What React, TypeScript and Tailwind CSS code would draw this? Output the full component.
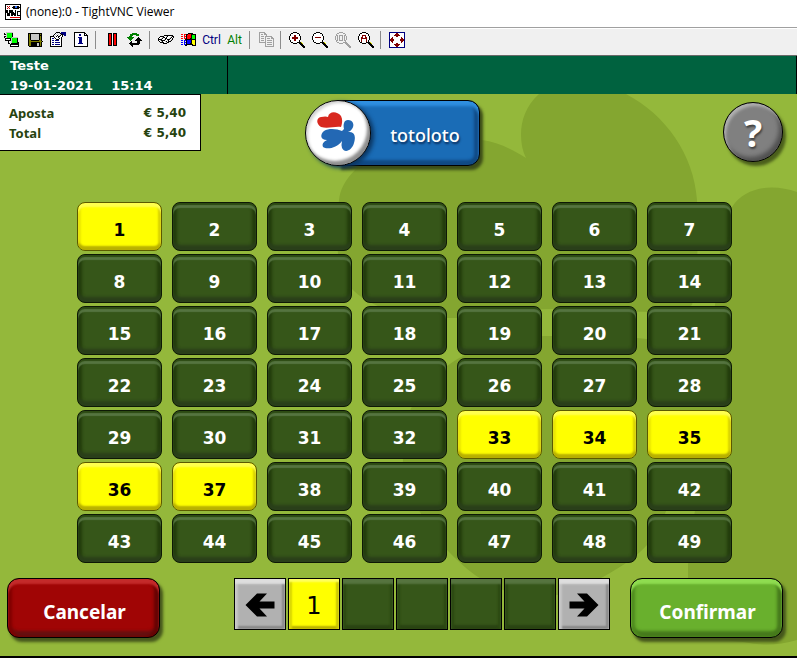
import type { ReactNode } from "react";

const TOOL = "flex h-[22px] w-[23px] shrink-0 items-center justify-center";

const PALETTE: Record<string, string> = {
  k: "#000000",
  w: "#ffffff",
  g: "#00ff00",
  G: "#008000",
  b: "#000080",
  B: "#0000ff",
  r: "#ff0000",
  R: "#800000",
  y: "#ffff00",
  o: "#808000",
  s: "#a0a0a0",
  l: "#c8c8c8",
};

function Pixels({ rows }: { rows: string[] }) {
  return (
    <svg width="16" height="16" viewBox="0 0 16 16" shapeRendering="crispEdges" aria-hidden="true">
      {rows.flatMap((row, y) =>
        row.split("").map((c, x) =>
          PALETTE[c] ? <rect key={x + "-" + y} x={x} y={y} width="1" height="1" fill={PALETTE[c]} /> : null,
        ),
      )}
    </svg>
  );
}

const NEW_CONNECTION = [
  "..lllllll.......",
  "k.lgggggk.......",
  "kklgggggk.......",
  "..lgggggk.......",
  "kklgggggk.......",
  "k.lgggggllllll..",
  ".kkkkkklgggggk..",
  ".kwwwwklgggggk..",
  ".kkkkkklgggggk..",
  "....k..lgggggk..",
  "....k..lgggggkk.",
  "....kk.kkkkkkkk.",
  "......kkkkkkkkk.",
  "......kwwwwwwwk.",
  "......kkkkkkkkk.",
  "................",
];
const SAVE = [
  "................",
  ".kkkkkkkkkkkkkk.",
  ".kokllllllllkok.",
  ".kokllllllllkkk.",
  ".kokllllllllkok.",
  ".kokllllllllkok.",
  ".kokllllllllkok.",
  ".kokllllllllkok.",
  ".kookkkkkkkkook.",
  ".koooooooooooook",
  ".kookkkkkkkkkok.",
  ".kookkkkkkllkok.",
  ".kookkkkkkllkok.",
  ".kookkkkkkllkok.",
  "..kkkkkkkkkkkkk.",
  "................",
];
const OPTIONS = [
  "......kkkk.bbbbb",
  ".....kwlwlkbbbbb",
  "....kwlwlwlkkbbb",
  "...kwlwkwlkwk.bb",
  "kkkklwkwkkwwk...",
  "kwwwkwwwkwwk....",
  "kwbbwkwwwkwk....",
  "kwwwwwkkkwwk....",
  "kwbbwbbbbwwk....",
  "kwwwwwwwwwwk....",
  "kwbbwbbbbbwk....",
  "kwwwwwwwwwwk....",
  "kwbbwbbbbbwk....",
  "kwwwwwwwwwwk....",
  "kkkkkkkkkkkk....",
  "................",
];
const INFO = [
  ".kkkkkkkkkkk....",
  ".kwwwwwwwwwkk...",
  ".kwwwwbbwwwkwk..",
  ".kwwwwbbwwwkkkk.",
  ".kwwwwwwwwwwwwk.",
  ".kwwwbbbbwwwwwk.",
  ".kwwwwbbbwwwwwk.",
  ".kwwwwbbbwwwwwk.",
  ".kwwwwbbbwwwwwk.",
  ".kwwwwbbbwwwwwk.",
  ".kwwwwbbbwwwwwk.",
  ".kwwwbbbbbwwwwk.",
  ".kwwwwwwwwwwwwk.",
  ".kwwwwwwwwwwwwk.",
  ".kkkkkkkkkkkkkk.",
  "................",
];
const PAUSE = [
  "................",
  "....kkkk.kkkk...",
  ...Array<string>(11).fill("....krrk.krrk..."),
  "....kkkk.kkkk...",
  "................",
  "................",
];
const REFRESH = [
  "................",
  ".....GGGGG......",
  "...GGGGGGGGG....",
  "...GGG...GGG....",
  "..GGG...........",
  "GGGGGGG....k....",
  ".GGGGG....kkk...",
  "..GGG....kkkkk..",
  "...G....kkkkkkk.",
  "....k.....kkk...",
  "...kk.....kkk...",
  "..kkkkkkkkkkk...",
  "...kkkkkkkkk....",
  "....kk..........",
  ".....k..........",
  "................",
];
const KEYS = [
  "................",
  "................",
  "................",
  "......kkkkkkkkk.",
  "..kkkkwwlkwwwlkk",
  ".kwwlkkwkwwwlkwk",
  "kwwlkwwkkwwlkwk.",
  "kkkkwwlkwkkkwlk.",
  "kwlkkkkwwlkwlk..",
  ".kwlkwwlkwkkk...",
  "..kkkkwwlkk.....",
  ".....kkkk.......",
  "................",
  "................",
  "................",
  "................",
];
const WINDOWS_KEY = [
  "................",
  ".......kkkkk....",
  "rr.rrkkrrrkkkkk.",
  "...r.krrrrkgggk.",
  "rr.rrkrrrrkgggk.",
  "...r.krrrrkgggk.",
  "rr.rrkrrrkkgggk.",
  "....kkkkkkkkkkk.",
  "BB.BBkBBBBkyyyk.",
  "...B.kBBBBkyyyk.",
  "BB.BBkBBBBkyyyk.",
  "...B.kBBBkkyyyk.",
  "BB.BBkkkkkkkyyk.",
  "....kk.....kkkk.",
  "................",
  "................",
];
const COPY = [
  ".ssssss.........",
  ".s....ss........",
  ".s.ss.sss.......",
  ".s......s.......",
  ".s.sss.sssssss..",
  ".s.....s.....ss.",
  ".s.sss.s.sss.sss",
  ".s.....s.......s",
  ".s.sss.s.sssss.s",
  ".s.....s.......s",
  ".sssssss.sssss.s",
  ".......s.......s",
  ".......s.sssss.s",
  ".......s.......s",
  ".......sssssssss",
  "................",
];
const FULL_SCREEN = [
  "bbbbbbbbbbbbbbbb",
  "bwwwwwwRRwwwwwwb",
  "bwwwwwRRRRwwwwwb",
  "bwwwwRRRRRRwwwwb",
  "bwwwwwwRRwwwwwwb",
  "bwwRwwwwwwwwRwwb",
  "bwRRwwwwwwwwRRwb",
  "bRRRRwwwwwwRRRRb",
  "bRRRRwwwwwwRRRRb",
  "bwRRwwwwwwwwRRwb",
  "bwwRwwwwwwwwRwwb",
  "bwwwwwwRRwwwwwwb",
  "bwwwwRRRRRRwwwwb",
  "bwwwwwRRRRwwwwwb",
  "bwwwwwwRRwwwwwwb",
  "bbbbbbbbbbbbbbbb",
];

function Magnifier({ kind }: { kind: "in" | "out" | "actual" | "auto" }) {
  const off = kind === "actual";
  const ink = off ? "#a0a0a0" : "#000";
  return (
    <svg width="16" height="16" viewBox="0 0 16 16" shapeRendering="crispEdges" aria-hidden="true" fill="none">
      <path
        d="M4 .5h4M2 1.500h2M8 1.500h2M1.500 2v2M10.500 2v2M.5 4v4M11.500 4v4M1.500 8v2M10.500 8v2M2 10.500h2M8 10.500h2M4 11.500h4"
        stroke={ink}
      />
      <path d="M4 1h4v1h2v2h1v4h-1v2H8v1H4v-1H2V8H1V4h1V2h2z" fill={off ? "#f0f0f0" : "#fff"} />
      <path d="M10 10h2v1h1v1h1v1h1v1h1v2h-2v-1h-1v-1h-1v-1h-1v-1h-1z" fill={ink} />
      {!off && <path d="M12 10h1v1h-1zM13 11h1v1h-1z" fill="#e8e800" />}
      {kind === "in" && <path d="M3 6h6M6 3v6" stroke="#800000" strokeWidth="1.5" />}
      {kind === "out" && <path d="M3 5.500h6" stroke="#800000" />}
      {kind === "actual" && <path d="M2.500 3v6M4.500 3.500h3v5h-3zM9.500 3v6" stroke="#a0a0a0" />}
      {kind === "auto" && <path d="M3.500 10V5h1V3h3v2h1v5M4 6.500h4" stroke="#800000" />}
    </svg>
  );
}

function Tool({ label, children }: { label: string; children: ReactNode }) {
  return (
    <button type="button" aria-label={label} className={TOOL}>
      {children}
    </button>
  );
}

function Separator() {
  return (
    <div className="h-[18px] w-2 shrink-0 pl-[3px]">
      <div className="h-full w-px bg-[#8c8c8c]" />
    </div>
  );
}

function VncLogo() {
  return (
    <svg width="16" height="16" viewBox="0 0 16 16" shapeRendering="crispEdges" aria-hidden="true" fill="none">
      <rect x=".5" y=".5" width="15" height="15" fill="#fff" stroke="#000" />
      <path d="M2 2h1v1H2zM4 2h1v1H4zM3 3h1v1H3zM2 4h1v1H2zM4 4h1v1H4z" fill="#c00000" />
      <path d="M7 3h1V2h6v1h1v1h-1v1H8V4H7z" fill="#000" />
      <path d="M10 2h2v2h-2z" fill="#3070ff" />
      <path d="M1 6h2v3h1V6h2v3H5v3H2V9H1zM6 6h2v2h1v1h1V6h1v6H9v-1H8v1H6zM12 7h3v1h-2v3h2v1h-3z" fill="#000" />
      <path d="M5 13.500h10" stroke="#e00000" />
    </svg>
  );
}

function Backdrop() {
  return (
    <svg
      className="absolute inset-0 h-full w-full"
      viewBox="0 94 797 562"
      preserveAspectRatio="xMidYMid slice"
      fill="#84a630"
      aria-hidden="true"
    >
      <path d="M539 94C526 106 521 120 521 135Q521 148 526 158C512 149 497 142 482 140C430 134 380 145 355 170C345 180 340 190 339 200C336 225 335 260 345 280C357 300 390 318 447 318C485 318 515 309 552 309C590 309 620 312 655 312Q680 312 692 305C697 285 699 240 697 200C694 155 666 115 626 94Z" />
      <path d="M463 356C485 345 510 336 552 336C590 336 620 336 647 339Q680 342 704 340Q712 325 715 305Q717 275 720 253C723 225 727 213 732 207C745 187 772 183 797 192V640Q770 648 743 642Q700 640 688 610V565Q690 535 697 500Q680 500 668 506C661 525 654 537 647 545C638 555 625 565 603 577Q580 590 557 595Q530 600 503 590Q485 582 475 575C455 560 435 540 420 512C406 485 402 470 403 460C403 435 404 420 413 405C422 388 440 368 463 356Z" />
    </svg>
  );
}

const KEY_BASE =
  "flex h-[49px] items-center justify-center rounded-lg border font-['DejaVu_Sans',sans-serif] text-[17px] leading-5 font-bold pt-1.5";
const KEY_ON =
  "border-[#5c5a00] bg-[#ffff00] text-black shadow-[inset_0_4px_2px_#ffff50,inset_0_-4px_2px_#b8b000,inset_-3px_0_2px_#d8d200,inset_3px_0_2px_#ece800]";
const KEY_OFF =
  "border-[#0d1805] bg-[#365619] text-white shadow-[inset_0_2px_1px_#2c4a12,inset_0_5px_1px_#557440,inset_0_-5px_3px_#2a3f1a,inset_4px_0_3px_#233d0c,inset_-4px_0_3px_#233d0c]";

const SELECTED = new Set([1, 33, 34, 35, 36, 37]);

const CELL = "flex h-[52px] w-[52px] shrink-0 items-center justify-center border border-black";
const CELL_GREEN =
  "bg-[#365619] shadow-[inset_0_5px_2px_#56743f,inset_3px_0_2px_#2c4911,inset_-3px_0_2px_#2c4911,inset_0_-4px_2px_#2b4514]";
const CELL_GREY =
  "pt-0.5 bg-[#b1b1b1] shadow-[inset_0_5px_2px_#dedede,inset_3px_0_2px_#c4c4c4,inset_-3px_0_2px_#888888,inset_0_-3px_2px_#858585]";
const CELL_YELLOW =
  "pt-1 bg-[#ffff00] shadow-[inset_0_3px_2px_#ffff60,inset_3px_0_2px_#d8d400,inset_-3px_0_2px_#c8c400,inset_0_-3px_2px_#b8b000]";

const ACTION =
  "h-[60px] w-[153px] shrink-0 rounded-xl border border-black pt-2 pl-0.5 font-['Noto_Sans',sans-serif] text-[19px] leading-6 font-bold text-white";

const AMOUNT = "font-['DejaVu_Sans',sans-serif] text-xs leading-5";

function Arrow({ flip }: { flip?: boolean }) {
  return (
    <svg width="30" height="24" viewBox="0 0 30 24" aria-hidden="true" className={flip ? "rotate-180" : ""}>
      <path d="M.5 12L12 .5H22L14.500 8.500H29.500V15.500H14.500L22 23.500H12Z" fill="#000" />
    </svg>
  );
}

export default function App() {
  return (
    <div className="flex min-h-screen flex-col border-b-2 border-black bg-white">
      <div className="flex h-[27px] items-center gap-[5px] pb-1 pl-[5px]">
        <VncLogo />
        <h1 className="font-['Open_Sans','Noto_Sans',sans-serif] text-xs leading-4 text-black">
          (none):0 - TightVNC Viewer
        </h1>
      </div>

      <div
        role="toolbar"
        aria-label="Viewer"
        className="flex h-[29px] items-center overflow-hidden border-t border-b border-t-[#a0a0a0] border-b-[#696969] bg-[#f0f0f0] pb-1 shadow-[inset_0_1px_0_#fff]"
      >
        <Tool label="New connection"><Pixels rows={NEW_CONNECTION} /></Tool>
        <Tool label="Save session"><Pixels rows={SAVE} /></Tool>
        <Tool label="Options"><Pixels rows={OPTIONS} /></Tool>
        <Tool label="Connection info"><Pixels rows={INFO} /></Tool>
        <Separator />
        <Tool label="Pause"><Pixels rows={PAUSE} /></Tool>
        <Tool label="Refresh"><Pixels rows={REFRESH} /></Tool>
        <Separator />
        <Tool label="Send Ctrl-Alt-Del"><Pixels rows={KEYS} /></Tool>
        <Tool label="Send Win key"><Pixels rows={WINDOWS_KEY} /></Tool>
        <button type="button" className={TOOL + " font-['Roboto',sans-serif] text-xs text-[#000080]"}>Ctrl</button>
        <button type="button" className={TOOL + " font-['Roboto',sans-serif] text-xs text-[#008000]"}>Alt</button>
        <Separator />
        <Tool label="Transfer files"><Pixels rows={COPY} /></Tool>
        <Separator />
        <Tool label="Zoom in"><Magnifier kind="in" /></Tool>
        <Tool label="Zoom out"><Magnifier kind="out" /></Tool>
        <Tool label="Actual size"><Magnifier kind="actual" /></Tool>
        <Tool label="Auto zoom"><Magnifier kind="auto" /></Tool>
        <Separator />
        <Tool label="Full screen"><Pixels rows={FULL_SCREEN} /></Tool>
      </div>

      <header className="flex h-[38px] border-r border-black bg-[#00623f] font-['DejaVu_Sans',sans-serif] text-[13px] leading-5 font-bold text-white">
        <div className="w-[228px] border-r border-black pl-2.5">
          <p>Teste</p>
          <p className="flex gap-[18px]">
            <span>19-01-2021</span>
            <span>15:14</span>
          </p>
        </div>
      </header>

      <main className="relative isolate flex grow flex-col overflow-hidden bg-[#94b83b]">
        <Backdrop />
        <div className="relative flex h-[108px] items-start justify-between pr-[14px]">
          <dl className="flex h-[57px] w-[201px] flex-col justify-center border border-l-0 border-black bg-white pr-3.5 pl-[9px] font-['Noto_Sans',sans-serif] text-[13px] leading-5 font-bold text-[#27430f]">
            <div className="flex justify-between"><dt>Aposta</dt><dd className={AMOUNT}>€ 5,40</dd></div>
            <div className="flex justify-between"><dt>Total</dt><dd className={AMOUNT}>€ 5,40</dd></div>
          </dl>

          <div className="mt-1.5 -ml-[140px] flex h-[66px] w-[175px] rounded-xl">
            <div className="z-10 flex size-[66px] shrink-0 items-center justify-center rounded-full border border-black bg-white shadow-[inset_-3px_-4px_3px_#8f8f8f,inset_2px_2px_3px_#d0d0d0,3px_2px_4px_#0b3560]">
              <svg width="42" height="42" viewBox="0 0 42 42" aria-hidden="true">
                <path d="M24 15C18 14 11 17 4 15C-1 12-1 6 4 5Q9 4 11 5C12-1 20-1 24 4C26 8 25 12 24 15Z" fill="#d8281f" />
                <path d="M27 17C26 12 27 8 31 8C36 8 38 13 35 17Q33 20 31 20C38 19 39 25 37 31C35 38 28 42 25 36Q24 33 25 29C20 36 10 38 6 35Q4 31 10 28C3 28 3 22 7 19C12 16 20 17 25 19Q26 18 27 17Z" fill="#2368b4" />
              </svg>
            </div>
            <div className="-ml-[33px] flex grow items-center justify-center rounded-r-xl border border-black bg-[#1a6cb6] pt-1 pl-[33px] font-['Noto_Sans',sans-serif] text-lg leading-6 font-medium text-white shadow-[inset_0_5px_3px_#2f8fe0,inset_-5px_0_3px_#114a85,inset_0_-5px_3px_#114a85,3px_4px_3px_#3c4c18] [text-shadow:1px_2px_2px_#0a3060]">
              totoloto
            </div>
          </div>

          <button
            type="button"
            aria-label="Ajuda"
            className="mt-2 size-[60px] rounded-full border border-black bg-[#808080] font-['Noto_Sans',sans-serif] text-[38px] leading-[54px] font-bold text-white shadow-[inset_2px_3px_3px_#b0b0b0,inset_-3px_-4px_4px_#505050,3px_4px_3px_#4a5e1c] [text-shadow:1px_2px_2px_#404040]"
          >
            ?
          </button>
        </div>

        <div className="relative grid grid-cols-7 gap-x-2.5 gap-y-[3px] pr-[65px] pl-[77px]">
          {Array.from({ length: 49 }, (_, i) => i + 1).map((n) => (
            <button
              key={n}
              type="button"
              aria-pressed={SELECTED.has(n)}
              className={KEY_BASE + " " + (SELECTED.has(n) ? KEY_ON : KEY_OFF)}
            >
              {n}
            </button>
          ))}
        </div>

        <div className="relative flex items-start pt-[15px] pr-[14px] pb-4 pl-[7px]">
          <button
            type="button"
            className={ACTION + " bg-[#a00505] shadow-[inset_0_5px_2px_#c42a2a,inset_4px_0_3px_#800000,inset_-5px_0_3px_#650404,inset_0_-6px_3px_#651010,3px_4px_3px_#45561c]"}
          >
            Cancelar
          </button>
          <div className="mr-5 ml-auto flex gap-0.5">
            <button type="button" aria-label="Anterior" className={CELL + " " + CELL_GREY}><Arrow /></button>
            <button type="button" className={CELL + " font-['DejaVu_Sans',sans-serif] text-2xl " + CELL_YELLOW}>1</button>
            {[2, 3, 4, 5].map((n) => (
              <button key={n} type="button" aria-label={"Aposta " + n} className={CELL + " " + CELL_GREEN} />
            ))}
            <button type="button" aria-label="Seguinte" className={CELL + " " + CELL_GREY}><Arrow flip /></button>
          </div>
          <button
            type="button"
            className={ACTION + " bg-[#69b02d] shadow-[inset_0_5px_2px_#8fdc50,inset_4px_0_3px_#4f8a1f,inset_-5px_0_3px_#467a1c,inset_0_-6px_3px_#467a1c,3px_4px_3px_#45561c]"}
          >
            Confirmar
          </button>
        </div>
      </main>
    </div>
  );
}
